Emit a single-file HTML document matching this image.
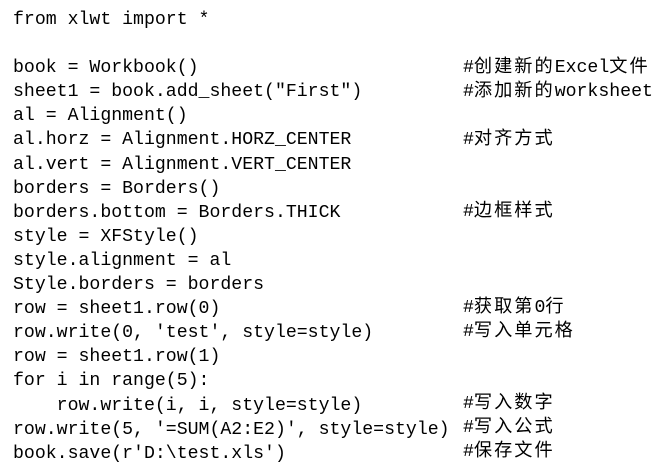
<html><head><style>
body{margin:0;background:#fff;width:665px;height:474px;overflow:hidden}
pre,div{position:absolute;margin:0;font-family:"Liberation Mono","Noto Sans CJK SC",monospace;font-size:18.2px;line-height:24.1px;color:#000;white-space:pre}
div{left:463px;height:24.1px}
i{font-style:normal;letter-spacing:2px}
</style></head><body><pre style="left:13px;top:8px">from xlwt import *

book = Workbook()
sheet1 = book.add_sheet("First")
al = Alignment()
al.horz = Alignment.HORZ_CENTER
al.vert = Alignment.VERT_CENTER
borders = Borders()
borders.bottom = Borders.THICK
style = XFStyle()
style.alignment = al
Style.borders = borders
row = sheet1.row(0)
row.write(0, 'test', style=style)
row = sheet1.row(1)
for i in range(5):
    row.write(i, i, style=style)
row.write(5, '=SUM(A2:E2)', style=style)
book.save(r'D:\test.xls')</pre>
<div style="top:56px">#<i>创建新的</i>Excel<i>文件</i></div>
<div style="top:80px">#<i>添加新的</i>worksheet</div>
<div style="top:128px">#<i>对齐方式</i></div>
<div style="top:200px">#<i>边框样式</i></div>
<div style="top:296px">#<i>获取第</i>0<i>行</i></div>
<div style="top:320px">#<i>写入单元格</i></div>
<div style="top:392px">#<i>写入数字</i></div>
<div style="top:416px">#<i>写入公式</i></div>
<div style="top:440px">#<i>保存文件</i></div>
</body></html>
